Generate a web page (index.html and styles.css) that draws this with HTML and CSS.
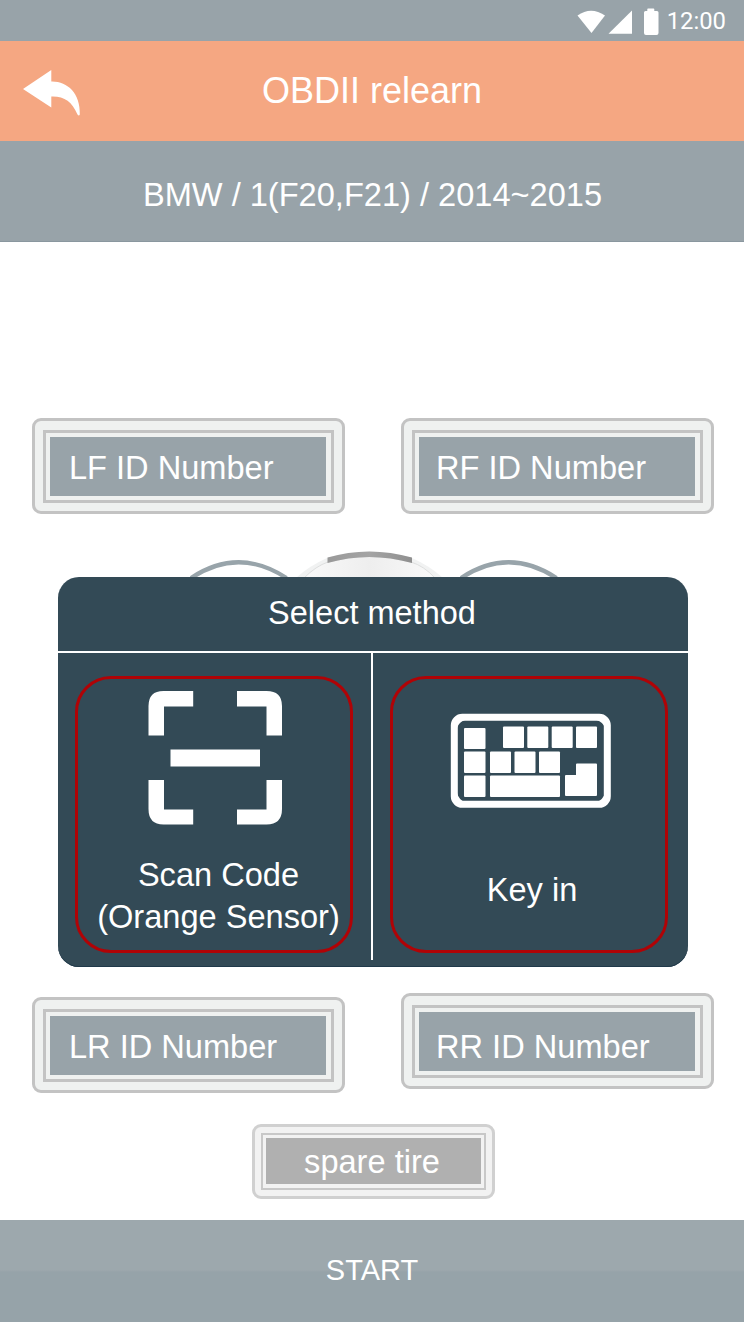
FILE: index.html
```html
<!DOCTYPE html>
<html lang="en">
<head>
<meta charset="utf-8">
<title>OBDII relearn</title>
<link rel="stylesheet" href="styles.css">
</head>
<body>
<div class="screen">
  <div class="status">
    <svg class="status-icons" width="84" height="28" viewBox="0 0 84 28" fill="#fff">
      <path d="M0.500 7.500Q14-2 28 7.500L14.500 25Z"/>
      <path d="M31.500 25.800L55 2.500V25.800Z"/>
      <path d="M71 .500h5.500q.8 0 .8.8V3H80q1.500 0 1.500 1.500V25q0 2-2 2H69q-2 0-2-2V4.500Q67 3 68.500 3h1.800V1.300Q70.300.500 71 .500Z"/>
    </svg>
    <span class="clock">12:00</span>
  </div>
  <header class="header">
    <svg class="back" width="60" height="50" viewBox="0 0 60 50" fill="#fff"><path d="M0 21L28.300 2V13.500C44 13 57.500 25 56.800 46.500Q56 48.500 54.500 46.500C49 33.500 41 28 28.300 28.500V39.500Z"/></svg>
    <h1 class="title">OBDII relearn</h1>
  </header>
  <div class="vehicle">BMW / 1(F20,F21) / 2014~2015</div>

  <main class="main">
    <div class="row">
      <div class="field"><div class="frame"><div class="fill">LF ID Number</div></div></div>
      <div class="field field-right"><div class="frame"><div class="fill">RF ID Number</div></div></div>
    </div>
    <svg class="car" width="744" height="50" viewBox="0 540 744 50" fill="none">
      <defs>
        <linearGradient id="roof" x1="327" x2="412" y1="0" y2="0" gradientUnits="userSpaceOnUse"><stop offset="0" stop-color="#999"/><stop offset=".5" stop-color="#a4a4a4"/><stop offset="1" stop-color="#8f8f8f"/></linearGradient>
        <linearGradient id="body" x1="300" x2="440" y1="0" y2="0" gradientUnits="userSpaceOnUse"><stop offset="0" stop-color="#fafafa"/><stop offset=".5" stop-color="#eee"/><stop offset="1" stop-color="#fafafa"/></linearGradient>
      </defs>
      <path d="M296 578Q309 566 327 558Q369 545 412 558Q430 566 443 578Z" fill="#f1f2f2"/>
      <path d="M304 578Q316 566 328 562Q369 551 411 562Q424 566 435 578Z" fill="url(#body)" stroke="#dedfdf"/>
      <path d="M327.500 557.500Q369 545.500 412 557.500V563Q369 551 327.500 563Z" fill="url(#roof)"/>
      <path d="M191 578Q238.500 546.500 286.500 578" stroke="#98a4aa" stroke-width="4.200"/>
      <path d="M461 578Q508.500 546.500 556.500 578" stroke="#98a4aa" stroke-width="4.200"/>
    </svg>
    <div class="row row-rear">
      <div class="field"><div class="frame"><div class="fill">LR ID Number</div></div></div>
      <div class="field field-right field-raised"><div class="frame"><div class="fill">RR ID Number</div></div></div>
    </div>
    <div class="spare"><div class="spare-frame"><div class="spare-fill">spare tire</div></div></div>

    <section class="dialog">
      <h2 class="dialog-title">Select method</h2>
      <div class="options">
        <div class="option">
          <svg class="scan-icon" width="136" height="136" viewBox="0 0 136 136" fill="#fff">
            <path d="M.5 45.500V16Q.5 1 15.500 1H45.200V16.500H16V45.500Z"/>
            <path d="M89 1H118.500Q134 1 134 16V45.500H118.500V16.500H89Z"/>
            <path d="M.5 90V119Q.5 134.500 15.500 134.500H45.200V119.500H16V90Z"/>
            <path d="M118.500 90H134V119Q134 134.500 118.500 134.500H89V119.500H118.500Z"/>
            <path d="M22.500 59.500h89.500v17H22.500z"/>
          </svg>
          <div class="label scan-label">Scan Code<br>(Orange Sensor)</div>
        </div>
        <div class="divider"></div>
        <div class="option">
          <svg class="key-icon" width="162" height="96" viewBox="0 0 162 96" fill="#fff">
            <rect x="4.300" y="4.300" width="153" height="87" rx="8" fill="none" stroke="#fff" stroke-width="7"/>
            <path d="M7 15V7H15Q9 9 7 15ZM146.500 7H155V15Q153 9 146.500 7ZM7 80V89H15Q9 87 7 80ZM155 80V89H146.500Q153 87 155 80Z"/>
            <rect x="14" y="15" width="21.500" height="21" rx="1"/>
            <rect x="14" y="38.500" width="21.500" height="21.500" rx="1"/>
            <rect x="14" y="62.500" width="21.500" height="21.500" rx="1"/>
            <rect x="53" y="13.500" width="21" height="21.500" rx="1"/>
            <rect x="77.300" y="13.500" width="21" height="21.500" rx="1"/>
            <rect x="101.700" y="13.500" width="21" height="21.500" rx="1"/>
            <rect x="126" y="13.500" width="21" height="21.500" rx="1"/>
            <rect x="40" y="38.500" width="21" height="21.500" rx="1"/>
            <rect x="64.500" y="38.500" width="21" height="21.500" rx="1"/>
            <rect x="89" y="38.500" width="21" height="21.500" rx="1"/>
            <rect x="40" y="62.500" width="70" height="21.500" rx="1"/>
            <path d="M126 51.500q0-1 1-1h19q1 0 1 1V82q0 1-1 1h-30q-1 0-1-1V63q0-1 1-1h10Z"/>
          </svg>
          <div class="label key-label">Key in</div>
        </div>
      </div>
    </section>
  </main>
  <button class="start">START</button>
</div>
</body>
</html>
```

FILE: styles.css
```css
* { box-sizing: border-box; }
body { margin: 0; background: #fff; font-family: "Liberation Sans", Arial, sans-serif; color: #fff; font-size: 32.6px; }
.screen { width: 744px; height: 1322px; display: flex; flex-direction: column; overflow: hidden; }

.status { height: 41px; background: #98a3a9; display: flex; justify-content: flex-end; padding: 8px 18px 0 0; }
.status-icons { margin-right: 6px; }
.clock { font: 23.8px/26px Roboto, sans-serif; }

.header { height: 100px; background: #f5a782; display: grid; grid-template-columns: 100px 1fr 100px; }
.back { margin: 27px 0 0 23px; }
.title { margin: 0; font-size: 36px; font-weight: 400; line-height: 100px; text-align: center; white-space: nowrap; }
.vehicle { height: 101px; background: #98a3a9; border-bottom: 1px solid #8a979f; padding-left: 1px; line-height: 108px; text-align: center; white-space: nowrap; }

.main { position: relative; height: 978px; padding-top: 176px; }
.row { display: flex; gap: 56px; padding-left: 32px; }
.row-rear { margin-top: 457px; }
.field { width: 313px; height: 96px; border: 3px solid #c3c3c3; border-radius: 9px; background: #eff1f0; padding: 9px 8px 8px; }
.frame { height: 73px; border: 3px solid #c3c3c3; padding: 4px 5px 4px 4px; }
.fill { height: 59px; background: #98a3a9; padding: 2px 0 0 19px; line-height: 58px; white-space: nowrap; }
.field-right .fill { padding-left: 17px; }
.field-raised { margin-top: -4px; }
.field-raised .fill { padding-top: 6px; }
.car { display: block; margin: 26px 0 -50px; }

.spare { width: 243px; height: 75px; margin: 31px 0 0 252px; border: 3px solid #d0d0d0; border-radius: 9px; background: #f2f2f2; padding: 6px; }
.spare-frame { height: 57px; border: 2px solid #c8c8c8; padding: 3px; }
.spare-fill { height: 46px; background: #b0b0b0; padding-right: 3px; line-height: 48px; text-align: center; }

.dialog { position: absolute; left: 58px; top: 335px; width: 630px; height: 390px; border-radius: 21px; background: #334a56; overflow: hidden; box-shadow: inset 0 -1px #20394a; }
.dialog-title { margin: 0; height: 76px; border-bottom: 2px solid #fff; padding-right: 2px; font-size: 32.5px; font-weight: 400; line-height: 72px; text-align: center; }
.options { display: flex; padding-left: 17px; }
.option { width: 278px; height: 277px; margin-top: 23px; border: 3px solid #b00306; border-radius: 36px; display: flex; flex-direction: column; align-items: center; }
.divider { width: 2px; height: 307px; margin: 0 17px 0 18px; background: #fff; }
.label { line-height: 42px; text-align: center; white-space: nowrap; }
.scan-icon { flex: none; margin: 11px 0 0 3px; }
.scan-label { margin: 28px 0 0 9px; }
.key-icon { flex: none; margin: 34px 0 0 3px; }
.key-label { margin: 60px 0 0 6px; }

.start { height: 102px; width: 100%; border: 0; padding: 0 0 2px; background: linear-gradient(#9da8ad 0 50px, #96a3a9 52px); color: #fff; font: 29px/100px "Liberation Sans", Arial, sans-serif; text-align: center; }
```
